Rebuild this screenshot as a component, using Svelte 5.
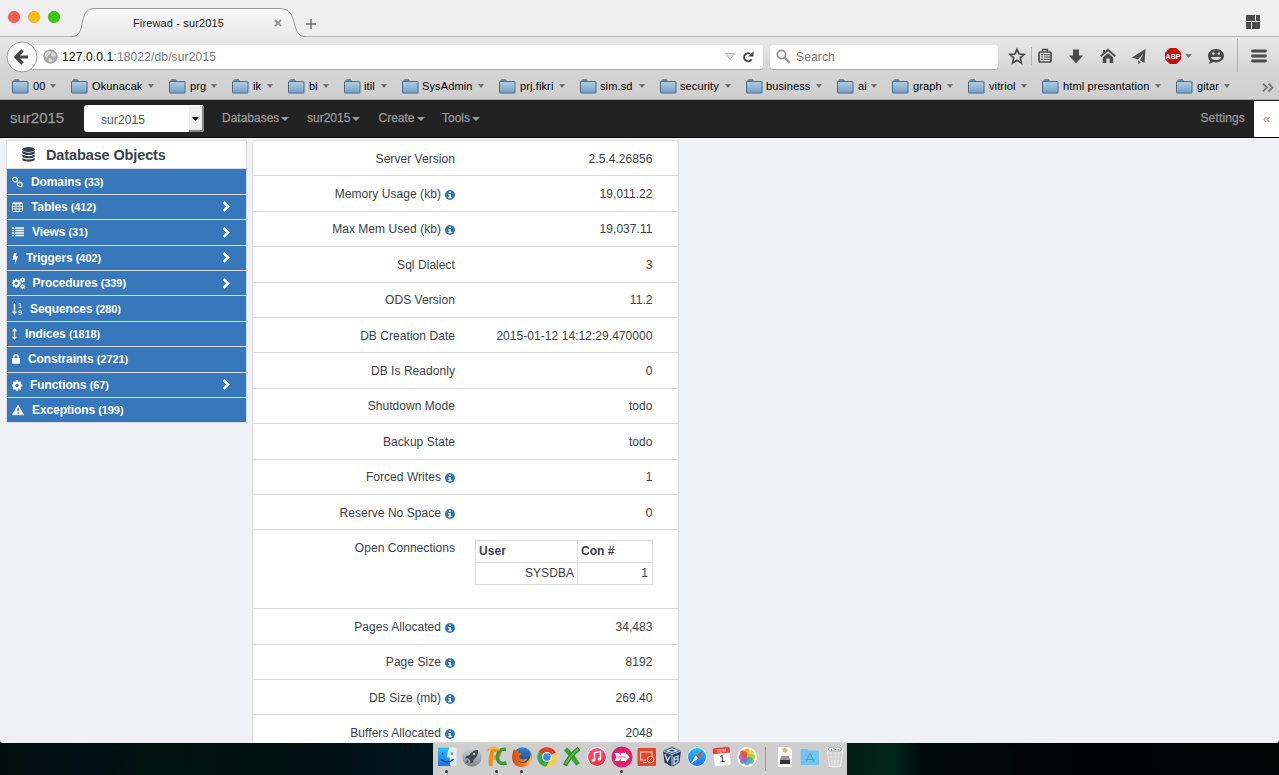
<script>
  // [label, folder x, label x, arrow x]
  const marks = [
    ['00', 12, 33, 50], ['Okunacak', 71, 92, 148], ['prg', 169, 190, 211], ['ik', 232, 253, 267],
    ['bi', 288, 309, 323], ['itil', 344, 364, 381], ['SysAdmin', 402, 422, 478], ['prj.fikri', 499, 520, 559],
    ['sim.sd', 580, 600, 639], ['security', 660, 680, 725], ['business', 746, 766, 816], ['ai', 837, 858, 871],
    ['graph', 892, 913, 947], ['vitriol', 968, 989, 1021], ['html presantation', 1042, 1063, 1155], ['gitar', 1176, 1197, 1224]
  ].map(([label, x, tx, ax], i, all) => ({
    label, pad: tx - x, text: ax - tx, width: (i + 1 < all.length ? all[i + 1][1] : 1262) - x
  }));

  const menus = [['Databases', 85], ['sur2015', 71.5], ['Create', 63.5], ['Tools', 60]];

  // [icon, name, count, has submenu, label offset]
  const objects = [
    ['link', 'Domains', 33, false, 19], ['table', 'Tables', 412, true, 19], ['list', 'Views', 31, true, 20],
    ['bolt', 'Triggers', 402, true, 14], ['cogs', 'Procedures', 339, true, 20.5], ['sort', 'Sequences', 280, false, 18],
    ['updown', 'Indices', 1818, false, 13], ['lock', 'Constraints', 2721, false, 16], ['cog', 'Functions', 67, true, 18],
    ['warn', 'Exceptions', 199, false, 20]
  ];

  const before = [
    ['Server Version', '2.5.4.26856'], ['Memory Usage (kb)', '19,011.22', true], ['Max Mem Used (kb)', '19,037.11', true],
    ['Sql Dialect', '3'], ['ODS Version', '11.2'], ['DB Creation Date', '2015-01-12 14:12:29.470000'],
    ['DB Is Readonly', '0'], ['Shutdown Mode', 'todo'], ['Backup State', 'todo'],
    ['Forced Writes', '1', true], ['Reserve No Space', '0', true]
  ];
  const after = [
    ['Pages Allocated', '34,483', true], ['Page Size', '8192', true], ['DB Size (mb)', '269.40', true], ['Buffers Allocated', '2048', true]
  ];

  const dock = ['finder', 'rocket', 'pc', 'firefox', 'chrome', 'x', 'music', 'skitch', 'rdp', 'vbox', 'safari', 'cal', 'photos'];
  const running = ['finder', 'pc', 'firefox', 'skitch'];
  const petals = ['#f7a11b', '#f4d21f', '#a5c93c', '#4fb07a', '#4aa5d8', '#7d6fc0', '#c15aa8', '#ea4a3c'];
  const teeth = [0, 45, 90, 135, 180, 225, 270, 315];
</script>

{#snippet gear(cx, cy, r, hole)}
  <g transform="translate({cx} {cy})">
    {#each teeth as a}<rect x={-r * 0.2} y={-r} width={r * 0.4} height={r * 0.4} fill="#fff" stroke="none" transform="rotate({a})" />{/each}
    <circle r={(r * 0.78 + hole) / 2} fill="none" stroke="#fff" stroke-width={r * 0.78 - hole} />
  </g>
{/snippet}

{#snippet objIcon(name)}
  <svg class="oi" width="16" height="14" viewBox="0 0 16 14" fill="none" stroke="#fff">
    {#if name === 'link'}
      <rect x=".7" y="2.6" width="5" height="4" rx="2" transform="rotate(25 3 4.5)" stroke-width="1.2" />
      <rect x="5.3" y="7.5" width="5" height="4" rx="2" transform="rotate(25 8 9.5)" stroke-width="1.2" />
      <path d="M4.1 5.6l3 3" stroke-width="1.2" />
    {:else if name === 'table'}
      <rect x=".5" y="3" width="10" height="8.5" rx=".8" />
      <path d="M.5 3.6h10" stroke-width="1.5" /><path d="M.5 6.3h10M.5 8.9h10M4 3v8.5M7.3 3v8.5" stroke-width=".8" />
    {:else if name === 'list'}
      <path d="M0 3h2M3 3h9M0 5.5h2M3 5.5h9M0 8h2M3 8h9M0 10.5h2M3 10.5h9" stroke-width="1.5" />
    {:else if name === 'bolt'}
      <path d="M2 2h2.7L3.700 5.600 6.200 5 2.700 13.500l.8-5.300L0.600 8.900z" fill="#fff" stroke="none" />
    {:else if name === 'cogs'}
      {@render gear(4.200, 7.200, 4.500, 1.700)}{@render gear(10.600, 3.900, 2.600, .9)}{@render gear(10.600, 10.600, 2.600, .9)}
    {:else if name === 'sort'}
      <path d="M2.500 1v10" stroke-width="1.400" /><path d="M0 9.800h5L2.500 13z" fill="#fff" stroke="none" />
      <text x="6" y="6.400" class="tiny">1</text><text x="6" y="13.200" class="tiny">9</text>
    {:else if name === 'updown'}
      <path d="M2.500 3v8" stroke-width="1.300" /><path d="M0 4.200L2.500 1 5 4.200zM0 9.800L2.500 13 5 9.800z" fill="#fff" stroke="none" />
    {:else if name === 'lock'}
      <rect x="0" y="6" width="8" height="5.700" rx=".7" fill="#fff" stroke="none" /><path d="M1.900 6.500V4.800a2.100 2.100 0 0 1 4.200 0v1.700" stroke-width="1.400" />
    {:else if name === 'cog'}
      {@render gear(5, 7.500, 5.300, 1.800)}
    {:else}
      <path d="M6 2l5.900 9.800H.1z" fill="#fff" stroke="#fff" stroke-width=".4" /><path d="M6 5v3.400M6 9.200v1.400" stroke="#3777bc" stroke-width="1.500" />
    {/if}
  </svg>
{/snippet}

{#snippet row(r)}
  <div class="row">
    <div class="lab">{r[0]}{#if r[2]}<svg class="info" width="10" height="10" viewBox="0 0 10 10"><circle cx="5" cy="5" r="5" fill="#3273b8" /><path d="M4 1.600h1.900v1.500H4zM3.300 4h2.600v3h.8v1.200H3.300V7h.8V5.200h-.8z" fill="#fff" /></svg>{/if}</div>
    <div class="val">{r[1]}</div>
  </div>
{/snippet}

{#snippet app(name)}
  <svg width="22" height="22" viewBox="0 0 22 22">
    {#if name === 'finder'}
      <rect x="2" y="1.5" width="18.5" height="18.5" rx="1" fill="#e3eef8" /><path d="M2 1.500h11.500c-2 4-2.400 7-2.400 10h2.700c0 3 .1 6 .8 8.500H2z" fill="url(#blue)" />
      <path d="M6.500 6.500v2.200M16 6.500v2.200M5 13c3.500 4 9 4 12.500 0" stroke="#163a66" stroke-width="1.200" fill="none" />
    {:else if name === 'rocket'}
      <circle cx="11" cy="11" r="9.700" fill="url(#silver)" /><path d="M17 4c-4 0-7 2-8.600 5.200L5.500 10 4 12.500l3-.2 2.500 2.500-.2 3.200L12 16.200l.7-2.800C16 11 17.400 8 17 4z" fill="#41474d" /><circle cx="13" cy="8" r="1.300" fill="#b9c0c6" /><path d="M6 14l-2 4 4-2z" fill="#555" />
    {:else if name === 'pc'}
      <path d="M5 20C4 14 5 9 6.500 4.500c8-2.500 9.500 5.500 1.500 7.500" fill="none" stroke="#f28b1c" stroke-width="4" /><path d="M20 3.500c-6-1-8.500 3-8.500 7.500 0 6 4 7.500 9 6" fill="none" stroke="#3c9b3f" stroke-width="3.500" /><path d="M1.500 5c3-4 8-4.500 12-1" stroke="#fbb034" stroke-width="2" fill="none" />
    {:else if name === 'firefox'}
      <circle cx="11.500" cy="10.500" r="9.300" fill="url(#ffblue)" /><path d="M3 3c1 1 2 1.500 4 1.500C6 6 8 7 10.500 7.500 10 9.500 8 9 8 10.500c0 3 6 4 8.500 1.500-1 5-7 5-10 2 2 4 11 4.500 13-4 .5-2 0-4-1-5.500 4 6 2 16.500-7.500 16.500C1 21-1 12 3 3z" fill="url(#flame)" />
    {:else if name === 'chrome'}
      <circle cx="11" cy="11" r="9.900" fill="#ffcd40" /><path d="M11 11L2.500 6a9.900 9.900 0 0 1 17.200.600z" fill="#e0412f" /><path d="M11 11L2.500 6a9.900 9.900 0 0 0 7.500 14.800l4.500-7.800z" fill="#35a852" /><circle cx="11" cy="11" r="4.900" fill="#fff" /><circle cx="11" cy="11" r="3.800" fill="#4285e8" />
    {:else if name === 'x'}
      <path d="M4.500 3c4.500 4 8 9 12.500 15.500" stroke="#36a332" stroke-width="4.600" fill="none" /><path d="M18 2.500C12 7 7 13 4 19.500" stroke="#2c8a2c" stroke-width="4.400" fill="none" /><path d="M17 3C11 8 8 12 4.500 18" stroke="#5fbd42" stroke-width="1.800" fill="none" />
    {:else if name === 'music'}
      <circle cx="11" cy="11" r="9.900" fill="#fff" /><circle cx="11" cy="11" r="9" fill="url(#red)" /><path d="M8.500 14V6.800l6-1.400v7.600" fill="none" stroke="#fff" stroke-width="1.400" /><ellipse cx="7.300" cy="14.200" rx="1.900" ry="1.500" fill="#fff" /><ellipse cx="13.300" cy="13.100" rx="1.900" ry="1.500" fill="#fff" />
    {:else if name === 'skitch'}
      <circle cx="11" cy="11" r="10.500" fill="#e0206e" /><path d="M3.500 7h4.500l2 2.200L9.500 7h4.500V6l4.700 5-4.700 5v-1H9.500l.5-2.200L8 15H3.500l2-4z" fill="#fff" /><path d="M6 11h9" stroke="#e0206e" stroke-width=".8" />
    {:else if name === 'rdp'}
      <rect x="1.500" y="2" width="18.500" height="18" rx="1" fill="#df482d" /><path d="M16 10V6H4.500v8H10M7 16.500h4" fill="none" stroke="#ffc4b4" stroke-width="1.200" /><circle cx="14.500" cy="13.500" r="3.300" fill="#df482d" stroke="#ffc4b4" /><path d="M12.500 15.500l4-4" stroke="#ffc4b4" />
    {:else if name === 'vbox'}
      <path d="M11 1l9 4-1.500 11.500L11 21l-7.500-4.500L2 5z" fill="#243f65" /><path d="M2 5l9 3.500L20 5M11 8.500V21" stroke="#c8d7e6" fill="none" /><path d="M6 4.800l5-2 5 2-5 1.600zM4 8l2.500 7L9 10M13 11.500l4-1.500v2.500l-4 1.500zM13 14l4-1.500v3L13 18z" stroke="#d5e1ee" fill="none" stroke-width="1.300" />
    {:else if name === 'safari'}
      <circle cx="11" cy="11" r="9.900" fill="#e5e9ed" /><circle cx="11" cy="11" r="9" fill="url(#blue)" /><path d="M17 4.500L12.400 12.400 9.600 9.600z" fill="#f2462f" /><path d="M5 17.500l4.600-7.900 2.800 2.800z" fill="#fff" />
    {:else if name === 'cal'}
      <g transform="rotate(-6 11 11)"><rect x="2.500" y="1.500" width="17" height="18.500" rx="1.500" fill="#fff" stroke="#bbb" stroke-width=".5" /><path d="M2.500 3a1.500 1.500 0 0 1 1.500-1.500h14A1.500 1.500 0 0 1 19.500 3v4.300h-17z" fill="#e8443a" /><text x="11" y="6.200" class="tem">TEM</text><text x="11" y="16" class="day">1</text></g>
    {:else}
      <circle cx="11" cy="11" r="9.900" fill="#fafafa" />{#each petals as c, i}<ellipse cx="11" cy="6.500" rx="2.900" ry="4" fill={c} opacity=".9" transform="rotate({i * 45} 11 11)" />{/each}
    {/if}
  </svg>
{/snippet}

<div class="screen">
  <header class="chrome">
    <div class="tabs">
      <svg class="lights" width="72" height="36"><circle cx="14" cy="17" r="5.700" fill="#fc5b52" stroke="#df4c44" stroke-width=".6" /><circle cx="34" cy="17" r="5.700" fill="#fdbc0d" stroke="#dd9f14" stroke-width=".6" /><circle cx="54" cy="17" r="5.700" fill="#38c713" stroke="#2ba310" stroke-width=".6" /></svg>
      <div class="tab">
        <svg class="shape" width="236" height="38"><defs><linearGradient id="tg" x2="0" y2="1"><stop stop-color="#f8f8f8" /><stop offset="1" stop-color="#e9e9e9" /></linearGradient></defs><path d="M0 36.500C9 36.500 9.500 31 11.500 22C13.500 12 16 8.500 25 8.500H207C217 8.500 220.500 12 223 22C225.500 31 226 36.500 235 36.500V38H0z" fill="url(#tg)" /><path d="M0 36.500C9 36.500 9.500 31 11.500 22C13.500 12 16 8.500 25 8.500H207C217 8.500 220.500 12 223 22C225.500 31 226 36.500 235 36.500" fill="none" stroke="#979797" /></svg>
        <span class="title">Firewad - sur2015</span>
        <svg class="close" width="8" height="8" viewBox="0 0 8 8"><path d="M1 1l6 6M7 1L1 7" stroke="#989898" stroke-width="2" /></svg>
      </div>
      <svg class="plus" width="10" height="10"><path d="M5 0v10M0 5h10" stroke="#6f6f6f" stroke-width="1.500" /></svg>
      <svg class="groups" width="14" height="14"><path d="M0 1q0-1 1-1h8v6H0zM10 0h3q1 0 1 1v5h-4zM0 7h5v7H1q-1 0-1-1zM6 7h8v6q0 1-1 1H6z" fill="#4b4b4b" /></svg>
    </div>

    <div class="bar">
      <svg class="back" width="32" height="32" viewBox="0 0 32 32"><circle cx="16" cy="16" r="15" fill="#fbfbfb" stroke="#9c9c9c" /><path d="M16.500 9.500L10 16l6.500 6.500M10.500 16H22" fill="none" stroke="#464646" stroke-width="3.200" /></svg>
      <div class="url">
        <svg width="15" height="15" viewBox="0 0 15 15"><circle cx="7.500" cy="7.500" r="6.800" fill="#a9a9a9" stroke="#8e8e8e" stroke-width=".7" /><path d="M2 5l3-3 3 .5-.5 2L5 6.500 4 9 2 7zM9 3l3 1 1 3-3 1-2-2zM6 9l3 1 .5 2L7 13.500 5.500 12z" fill="#dedede" /></svg>
        <span class="addr"><b>127.0.0.1</b>:18022/db/sur2015</span>
        <svg class="drop" width="10" height="7"><path d="M.5.500h9L5 6.500z" fill="#e5e5e5" stroke="#b5b5b5" /></svg>
        <svg width="12" height="12" viewBox="0 0 12 12"><path d="M8 2.700A4 4 0 1 0 9.600 8.300" stroke="#454545" stroke-width="2" fill="none" /><path d="M6 5.600L11.500.300v5.300z" fill="#454545" /></svg>
      </div>
      <div class="search">
        <svg width="15" height="15" viewBox="0 0 15 15" fill="none" stroke="#969696"><circle cx="5.500" cy="5.500" r="4.200" stroke-width="1.800" /><path d="M8.600 8.600l5 4.900" stroke-width="2.400" /></svg>Search
      </div>
      <div class="tools">
        <svg width="270" height="39" viewBox="1000 38 270 39" fill="none" stroke="#4b4b4b">
          <path d="M1017 50.300l2.100 4.700 5 .500-3.800 3.400 1.100 5-4.400-2.600-4.400 2.600 1.100-5-3.800-3.400 5-.500z" stroke-width="1.700" />
          <path d="M1031.500 48v18" stroke="#b5b5b5" />
          <rect x="1039" y="53" width="12" height="10" rx="1" stroke-width="1.700" /><path d="M1042.500 52.500v-2h5v2" stroke-width="1.500" /><path d="M1041 55.800h2M1044 55.800h6M1041 58h2M1044 58h6M1041 60.300h2M1044 60.300h6" stroke-width="1.100" />
          <path d="M1073 50.500h6v6h4l-7 8-7-8h4z" fill="#4b4b4b" stroke="none" />
          <path d="M1108 49.500l8 7.300-1.300 1.300-6.700-5.900-6.700 5.900-1.300-1.300 3-2.700V51h2v1.300z" fill="#4b4b4b" stroke="none" /><path d="M1102.800 58.500l5.200-4.600 5.200 4.600V64h-3.500v-4.500h-3.400V64h-3.500z" fill="#4b4b4b" stroke="none" />
          <path d="M1145.500 50L1144.500 64l-4.500-2.800 3.500-7-5.500 6.300-6-2zM1138 61.500l3 1.500-2.500 2.200z" fill="#4b4b4b" stroke="none" />
          <path d="M1169.800 49h6.500l4.700 4.700v6.600l-4.700 4.700h-6.500l-4.800-4.700v-6.600z" fill="#c90f08" stroke="none" /><text x="1173" y="59.900" class="abp">ABP</text>
          <path d="M1185 55h7l-3.500 4z" fill="#777" stroke="none" />
          <path d="M1216 50c4.400 0 8 2.900 8 6.700s-3.600 6.700-8 6.700c-1 0-1.900-.1-2.700-.4-.9.900-2.600 1.500-5 1.500 1.100-.8 1.600-1.700 1.600-2.800-1.200-1.200-1.900-3-1.900-5 0-3.800 3.600-6.700 8-6.700z" fill="#4b4b4b" stroke="none" /><circle cx="1213.400" cy="54.500" r="1.200" fill="#ddd" stroke="none" /><circle cx="1218.800" cy="54.500" r="1.200" fill="#ddd" stroke="none" /><path d="M1210.800 58h10.500c-1 4-9.500 4-10.500 0z" fill="#ddd" stroke="none" />
          <path d="M1237.500 40v33" stroke="#aab0b6" />
          <path d="M1252.500 52h13M1252.500 57h13M1252.500 62h13" stroke-width="2.800" stroke-linecap="round" />
        </svg>
      </div>
    </div>

    <div class="marks">
      {#each marks as m}
        <div class="mark" style="width:{m.width}px">
          <span class="fold" style="width:{m.pad}px"><svg width="17" height="15" viewBox="0 0 17 15"><path d="M2 3V1.500q0-1 1-1h3.500l1 1.500V4H2z" fill="#5f8fb7" stroke="#557da2" stroke-width=".8" /><rect x=".5" y="2.500" width="15.500" height="11.500" rx=".5" fill="url(#fold)" stroke="#446c92" /></svg></span>
          <span class="name" style="width:{m.text}px">{m.label}</span>
          <i class="tri"></i>
        </div>
      {/each}
      <svg class="more" width="12" height="9"><path d="M1 .5l4 4-4 4M6.500.5l4 4-4 4" fill="none" stroke="#777" stroke-width="1.800" /></svg>
    </div>
  </header>

  <nav class="nav">
    <span class="brand">sur2015</span>
    <div class="select"><span>sur2015</span><i><svg width="7" height="4"><path d="M0 0h7L3.500 4z" /></svg></i></div>
    {#each menus as [name, w]}<span class="menu" style="width:{w}px">{name}<i class="caret"></i></span>{/each}
    <span class="settings">Settings</span>
    <span class="toggle">«</span>
  </nav>

  <main class="page">
    <aside class="side">
      <div class="head">
        <svg width="13" height="15" viewBox="0 0 13 15" fill="#3b4148"><ellipse cx="6.500" cy="2.500" rx="6.200" ry="2.400" /><path d="M.3 4.100q6.200 3.300 12.400 0v1.800c0 2.700-12.400 2.700-12.400 0zM.3 7.500q6.200 3.300 12.400 0v1.800c0 2.700-12.400 2.700-12.400 0zM.3 10.900q6.200 3.300 12.400 0v1.700c0 2.700-12.400 2.700-12.400 0z" /></svg>
        <span>Database Objects</span>
      </div>
      {#each objects as [icon, name, n, sub, off]}
        <div class="obj">
          <span class="ic" style="width:{off}px">{@render objIcon(icon)}</span>
          <span class="nm">{name} <small>({n})</small></span>
          {#if sub}<svg class="chev" width="8" height="11"><path d="M1.500 1l4.500 4.400L1.500 9.900" fill="none" stroke="#fff" stroke-width="2.600" /></svg>{/if}
        </div>
      {/each}
    </aside>

    <section class="card">
      {#each before as r}{@render row(r)}{/each}
      <div class="row conn">
        <div class="lab">Open Connections</div>
        <table>
          <thead><tr><th>User</th><th>Con #</th></tr></thead>
          <tbody><tr><td>SYSDBA</td><td class="n">1</td></tr></tbody>
        </table>
      </div>
      {#each after as r}{@render row(r)}{/each}
    </section>
  </main>

  <footer class="desk">
    <div class="dock">
      {#each dock as d}<div class="app" class:on={running.includes(d)}>{@render app(d)}</div>{/each}
      <i class="sep"></i>
      <div class="app"><svg width="22" height="22" viewBox="0 0 22 22"><path d="M4 1h11l3 3v17H4z" fill="#fafafa" /><path d="M8 3l3-1 3 2-2 3-3-1z" fill="#d7bc70" /><path d="M7 10h8l1 5H6z" fill="#999" /><path d="M6 14h10v4H6z" fill="#333" /></svg></div>
      <div class="app"><svg width="22" height="22" viewBox="0 0 22 22"><path d="M1.500 4q0-1 1-1H8l1.500 1.500H19q1 0 1 1V18q0 1-1 1H2.500q-1 0-1-1z" fill="#72c5ee" /><path d="M7 15.500l4-8 4 8M6.500 13.500h9" stroke="#4a9fcb" stroke-width="1.100" fill="none" /></svg></div>
      <div class="app"><svg width="22" height="22" viewBox="0 0 22 22"><path d="M3 3h16l-2.500 17.500q-5.500 1-11 0z" fill="#dedede" stroke="#f8f8f8" stroke-width=".8" /><path d="M5 5l2 15M8.500 6l1 14M13.500 6l-1 14M17 5l-2 15M4 9h14M5 13h12" stroke="#c6c6c6" stroke-width=".6" /><path d="M4 3l3-2 3 1.500L14 1l4 2-2 2H6z" fill="#f8f8f8" stroke="#888" stroke-width=".6" /><path d="M7 4h1M11 3.500h1.500M14.500 4h1" stroke="#444" /></svg></div>
    </div>
  </footer>

  <svg class="defs" width="0" height="0"><defs>
    <linearGradient id="blue" x2="0" y2="1"><stop stop-color="#21c5f5" /><stop offset="1" stop-color="#1d6fee" /></linearGradient>
    <linearGradient id="ffblue" x2="0" y2="1"><stop stop-color="#3388d3" /><stop offset="1" stop-color="#123674" /></linearGradient>
    <linearGradient id="flame" x2="1" y2="0"><stop stop-color="#d94b12" /><stop offset=".6" stop-color="#ee7a14" /><stop offset="1" stop-color="#fdc62f" /></linearGradient>
    <linearGradient id="red" x2="0" y2="1"><stop stop-color="#ff4b75" /><stop offset="1" stop-color="#f5303a" /></linearGradient>
    <linearGradient id="silver" x2="0" y2="1"><stop stop-color="#d2d6d9" /><stop offset="1" stop-color="#7b8389" /></linearGradient>
    <linearGradient id="fold" x2="0" y2="1"><stop stop-color="#b5cde0" /><stop offset="1" stop-color="#739fc5" /></linearGradient>
  </defs></svg>
</div>

<style>
  :global(body) { margin: 0; overflow: hidden; }
  .screen { width: 1279px; height: 775px; display: flex; flex-direction: column; overflow: hidden; font: 12px "Liberation Sans", Arial, sans-serif; background: #000; }
  svg { display: block; flex: none; }
  .defs { position: absolute; }

  .chrome { height: 100px; box-sizing: border-box; border-bottom: 1px solid #ababab; background: linear-gradient(#e9e9e9 37px, #d5d5d5 70px, #cecece); }
  .tabs { height: 36px; border-bottom: 1px solid #b4b4b4; background: #efefef; display: flex; align-items: center; }
  .tab { width: 236px; height: 36px; position: relative; display: flex; align-items: center; }
  .shape { position: absolute; left: -1px; top: 0; }
  .title { position: relative; margin: 9px 0 0 61px; width: 145px; font-size: 11px; letter-spacing: .14px; color: #222; white-space: nowrap; }
  .close { position: relative; margin: 10px 0 0 -4px; }
  .plus { margin: 12px 0 0 -2px; }
  .groups { margin: 8px 19px 0 auto; }
  .bar { height: 39px; display: flex; align-items: center; }
  .back { margin-left: 6px; position: relative; z-index: 1; }
  .url { width: 741px; height: 24px; margin-left: -16px; padding: 0 9px 0 21px; box-sizing: border-box; display: flex; align-items: center; background: #fff; border-radius: 3px; box-shadow: 0 1px 0 #a9a9a9; }
  .addr { margin-left: 4px; letter-spacing: .15px; color: #777; }
  .addr b { font-weight: 400; color: #000; }
  .drop { margin: 0 7px 0 auto; }
  .search { width: 228px; height: 24px; box-sizing: border-box; margin-left: 7px; padding-left: 6px; display: flex; gap: 5px; align-items: center; background: #fff; border-radius: 3px; box-shadow: 0 1px 0 #a9a9a9; color: #757575; letter-spacing: .15px; }
  .tools { margin-left: 2px; }
  .abp { font: bold 7px "Liberation Sans", sans-serif; fill: #fff; stroke: none; text-anchor: middle; }
  .marks { height: 20px; display: flex; align-items: center; padding-left: 12px; font-size: 11px; letter-spacing: .12px; color: #000; }
  .mark { display: flex; align-items: center; white-space: nowrap; flex: none; height: 16px; }
  .fold { flex: none; }
  .name { margin-top: -1px; }
  .tri { width: 0; border: 3.5px solid transparent; border-top: 4px solid #6e6e6e; border-bottom: 0; }
  .more { margin-top: 2px; }

  .nav { height: 38px; box-sizing: border-box; border-bottom: 1px solid #080808; background: #222; color: #999; display: flex; align-items: center; -webkit-text-stroke: .25px #999; }
  .brand { width: 74px; padding-left: 10px; margin-top: -2px; font-size: 15px; }
  .select { width: 120px; height: 27px; margin-right: 18px; box-sizing: border-box; background: #fff; border-radius: 3px; color: #555; display: flex; justify-content: space-between; -webkit-text-stroke: 0; }
  .select span { padding: 8px 0 0 17px; letter-spacing: .1px; }
  .select i { width: 15px; margin-top: 1px; box-sizing: border-box; background: #efefef; border-right: 2px solid #858585; border-bottom: 2px solid #858585; border-radius: 0 0 3px 0; padding: 11px 0 0 3px; }
  .menu { display: flex; align-items: center; margin-top: -2px; }
  .caret { margin: 3px 0 0 2px; border: 4px solid transparent; border-top-color: #999; border-bottom: 0; }
  .settings { margin: -2px 9px 0 auto; letter-spacing: .15px; }
  .toggle { width: 25px; height: 36px; line-height: 36px; text-align: center; background: #fff; color: #999; font-size: 13px; -webkit-text-stroke: 0; }

  .page { height: 605px; box-sizing: border-box; overflow: hidden; display: flex; align-items: flex-start; gap: 5px; padding: 2px 0 0 6px; background: #f0f1f5; color: #3a3f47; border-radius: 0 0 3px 3px; }
  .side { width: 241px; box-sizing: border-box; border: 1px solid #ddd; }
  .head { height: 27.4px; background: #fff; display: flex; align-items: center; font-size: 14.5px; letter-spacing: -.12px; font-weight: 700; }
  .head svg { margin: 0 11px 0 15px; }
  .obj { height: 25.4px; box-sizing: border-box; border-top: 1px solid #ddd; background: #3777bc; color: #fff; display: flex; align-items: center; padding: 0 16px 0 5px; font-size: 12px; letter-spacing: -.1px; font-weight: 700; }
  .ic { flex: none; }
  .nm { flex: 1; }
  .nm small { font-size: 11px; }
  .tiny { font: 7px "Liberation Sans", sans-serif; fill: #fff; stroke: none; }

  .card { width: 427px; box-sizing: border-box; background: #fff; border: 1px solid #ddd; border-radius: 4px 4px 0 0; }
  .row { height: 35.4px; box-sizing: border-box; border-bottom: 1px solid #ddd; display: flex; line-height: 17px; padding-top: 9.6px; letter-spacing: .05px; }
  .lab { width: 202px; display: flex; justify-content: flex-end; align-items: center; height: 17px; }
  .info { margin: 1px 0 0 4px; }
  .val { width: 197.5px; text-align: right; }
  .conn { height: 79px; }
  table { width: 178px; height: 44px; margin: .4px 0 0 20px; border-collapse: collapse; line-height: 15px; }
  th, td { border: 1px solid #ddd; padding: 3px; height: 15px; text-align: right; }
  th { text-align: left; width: 95px; }
  th:last-child { width: auto; }
  td.n { padding-right: 4px; }

  .desk { height: 32px; display: flex; justify-content: center; padding-left: 1px; background: linear-gradient(90deg, #000e10, #001014 8%, #02140e 12%, #001014 25%, #00171c 33%, #032016 67%, #012519 70%, #000c0c 72%, #000306 85%, #000504); }
  .dock { width: 414px; height: 32px; box-sizing: border-box; padding-left: 1px; background: #cecece; border-radius: 3px 3px 0 0; display: flex; box-shadow: 0 -1px 0 #d8d8d8; }
  .app { flex: none; width: 25px; height: 32px; padding: 3px 0 0 1.5px; box-sizing: border-box; }
  .on::after { content: ""; display: block; width: 3px; height: 3px; margin: 2px 0 0 9.5px; border-radius: 50%; background: #333; }
  .sep { width: 1px; height: 24px; background: #999; margin: 4px 6px 0; }
  .tem { font: 4.5px "Liberation Sans", sans-serif; fill: #fff; text-anchor: middle; }
  .day { font: 10px "Liberation Sans", sans-serif; fill: #222; text-anchor: middle; }
</style>
